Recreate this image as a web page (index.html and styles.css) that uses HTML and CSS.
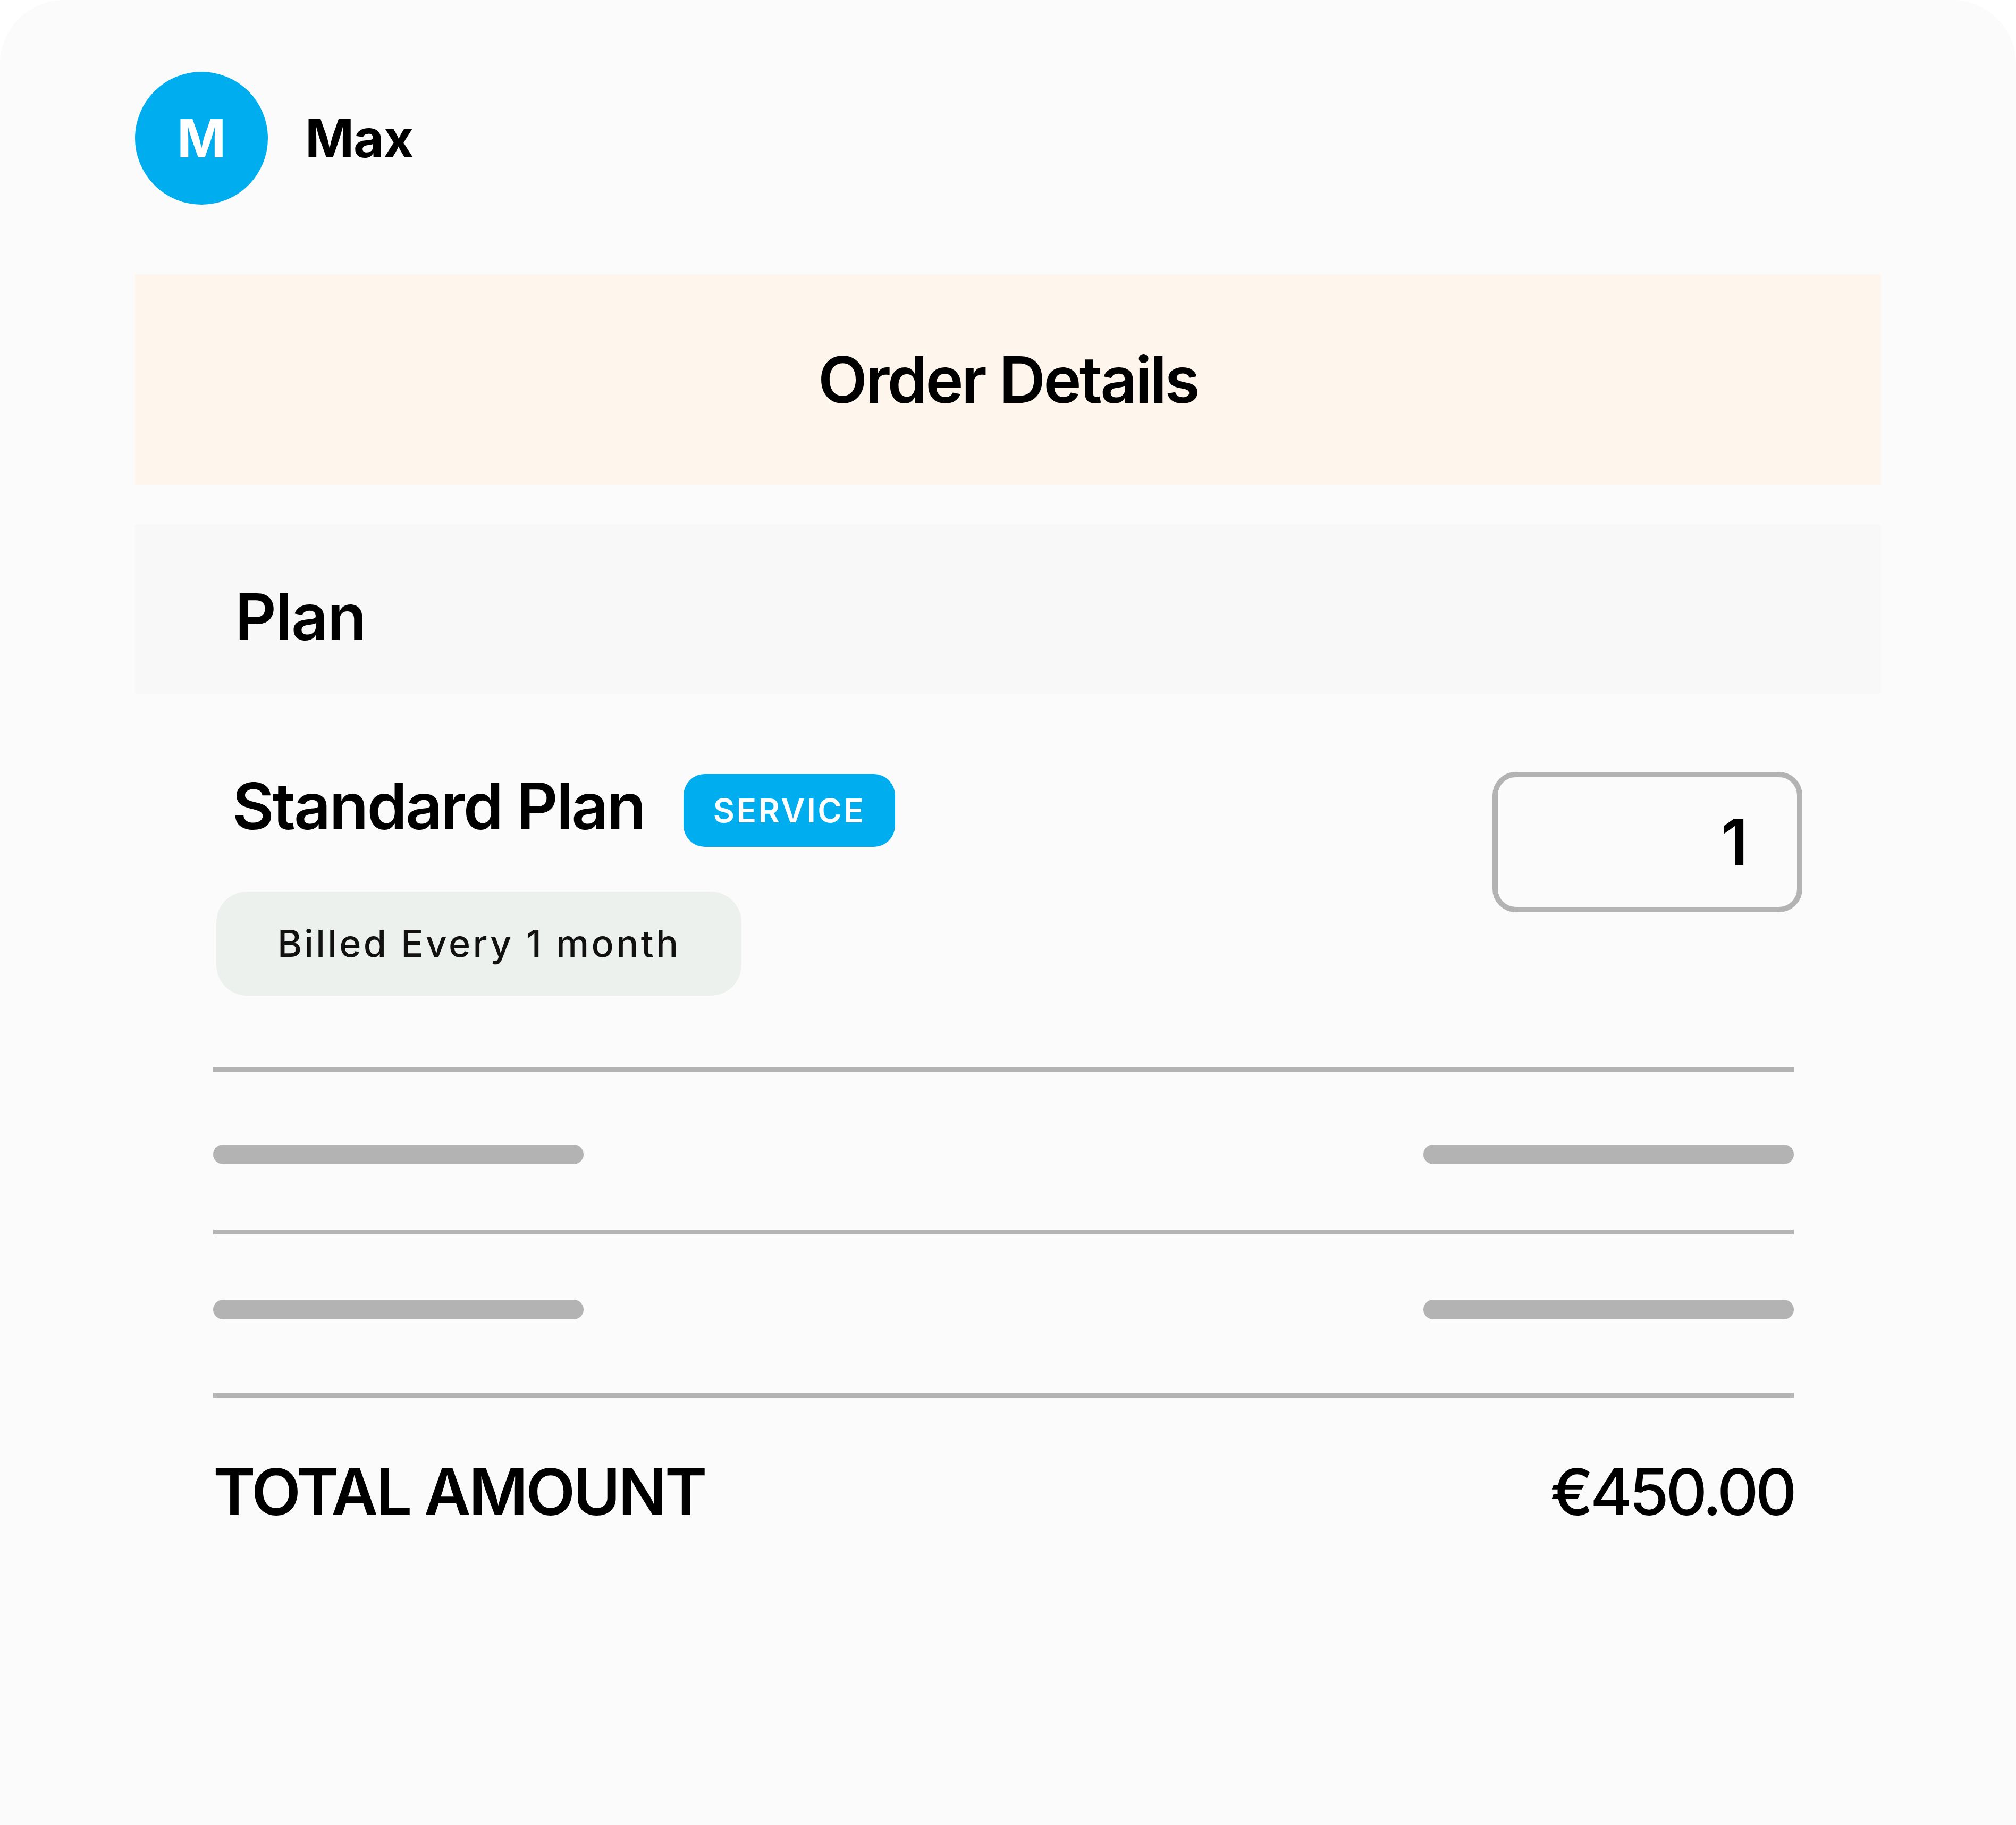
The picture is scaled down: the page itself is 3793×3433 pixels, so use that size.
FILE: index.html
```html
<!DOCTYPE html>
<html lang="en">
<head>
<meta charset="utf-8">
<title>Order Details</title>
<link rel="stylesheet" href="styles.css">
</head>
<body>
<div class="card">
  <header class="user">
    <div class="avatar">M</div>
    <div class="user-name">Max</div>
  </header>

  <div class="band band-order">
    <h1 class="title order-title">Order Details</h1>
  </div>

  <div class="band band-plan">
    <h2 class="title plan-title">Plan</h2>
  </div>

  <div class="item">
    <div class="item-info">
      <div class="item-head">
        <span class="title item-name">Standard Plan</span>
        <span class="badge">SERVICE</span>
      </div>
      <div class="billing">Billed Every 1 month</div>
    </div>
    <div class="qty">1</div>
  </div>

  <div class="summary">
    <div class="rule"></div>
    <div class="summary-row row-a">
      <span class="bar"></span>
      <span class="bar"></span>
    </div>
    <div class="rule"></div>
    <div class="summary-row row-b">
      <span class="bar"></span>
      <span class="bar"></span>
    </div>
    <div class="rule"></div>
    <div class="total">
      <span class="total-label">TOTAL AMOUNT</span>
      <span class="total-value">€450.00</span>
    </div>
  </div>
</div>
</body>
</html>
```

FILE: styles.css
```css
* {
  box-sizing: border-box;
}

html, body {
  margin: 0;
  padding: 0;
  background: #ffffff;
}

body {
  font-family: "Inter", "Liberation Sans", sans-serif;
  color: #000000;
}

.card {
  min-height: 3433px;
  background: #fbfbfb;
  border-radius: 120px 120px 0 0;
  padding: 135px 254px 0;
}

.user {
  display: flex;
  align-items: center;
  gap: 70px;
  height: 250px;
}

.avatar {
  width: 250px;
  height: 250px;
  border-radius: 50%;
  background: #00aeef;
  color: #ffffff;
  display: flex;
  align-items: center;
  justify-content: center;
  font-weight: 700;
  font-size: 99px;
  line-height: 1;
}

.user-name {
  font-weight: 700;
  font-size: 99px;
  line-height: 1;
  letter-spacing: -0.012em;
}

.title {
  margin: 0;
  font-weight: 600;
  font-size: 121px;
  line-height: 1;
  letter-spacing: -0.04em;
}

.order-title {
  letter-spacing: -0.032em;
}

.plan-title {
  letter-spacing: -0.015em;
}

.band-order {
  margin-top: 131px;
  height: 396px;
  background: #fef6ec;
  display: flex;
  align-items: center;
  justify-content: center;
}

.band-plan {
  margin-top: 75px;
  height: 318px;
  background: #f7f8f7;
  padding: 113px 0 0 188px;
}

.item {
  display: flex;
  justify-content: space-between;
  align-items: flex-start;
  margin-top: 147px;
  padding: 0 148px 0 153px;
}

.item-info {
  padding-top: 4px;
}

.item-head {
  display: flex;
  align-items: flex-start;
  gap: 73px;
  padding-left: 30px;
}

.item-name {
  letter-spacing: -0.025em;
}

.badge {
  height: 137px;
  padding: 0 56px;
  display: flex;
  align-items: center;
  background: #00aeef;
  color: #ffffff;
  border-radius: 40px;
  font-weight: 600;
  font-size: 62px;
  line-height: 1;
  letter-spacing: 0.055em;
}

.billing {
  margin-top: 84px;
  width: fit-content;
  height: 196px;
  padding: 0 115px;
  display: flex;
  align-items: center;
  background: #edf1ee;
  border-radius: 58px;
  font-weight: 500;
  font-size: 70px;
  line-height: 1;
  letter-spacing: 0.062em;
  color: #111111;
}

.qty {
  width: 583px;
  height: 264px;
  border: 10px solid #b3b3b3;
  border-radius: 44px;
  display: flex;
  align-items: center;
  justify-content: flex-end;
  padding-right: 92px;
  font-weight: 600;
  font-size: 121px;
  line-height: 1;
}

.summary {
  margin-top: 134px;
  padding: 0 164px 0 147px;
}

.rule {
  height: 9px;
  background: #b3b3b3;
}

.summary-row {
  display: flex;
  justify-content: space-between;
}

.row-a {
  padding: 137px 0 123px;
}

.row-b {
  padding: 123px 0 138px;
}

.bar {
  display: block;
  width: 697px;
  height: 37px;
  border-radius: 19px;
  background: #b3b3b3;
}

.total {
  display: flex;
  justify-content: space-between;
  margin-top: 117px;
  font-weight: 600;
  font-size: 121px;
  line-height: 1;
}

.total-label {
  letter-spacing: -0.034em;
}

.total-value {
  font-weight: 500;
  letter-spacing: -0.049em;
}
```
